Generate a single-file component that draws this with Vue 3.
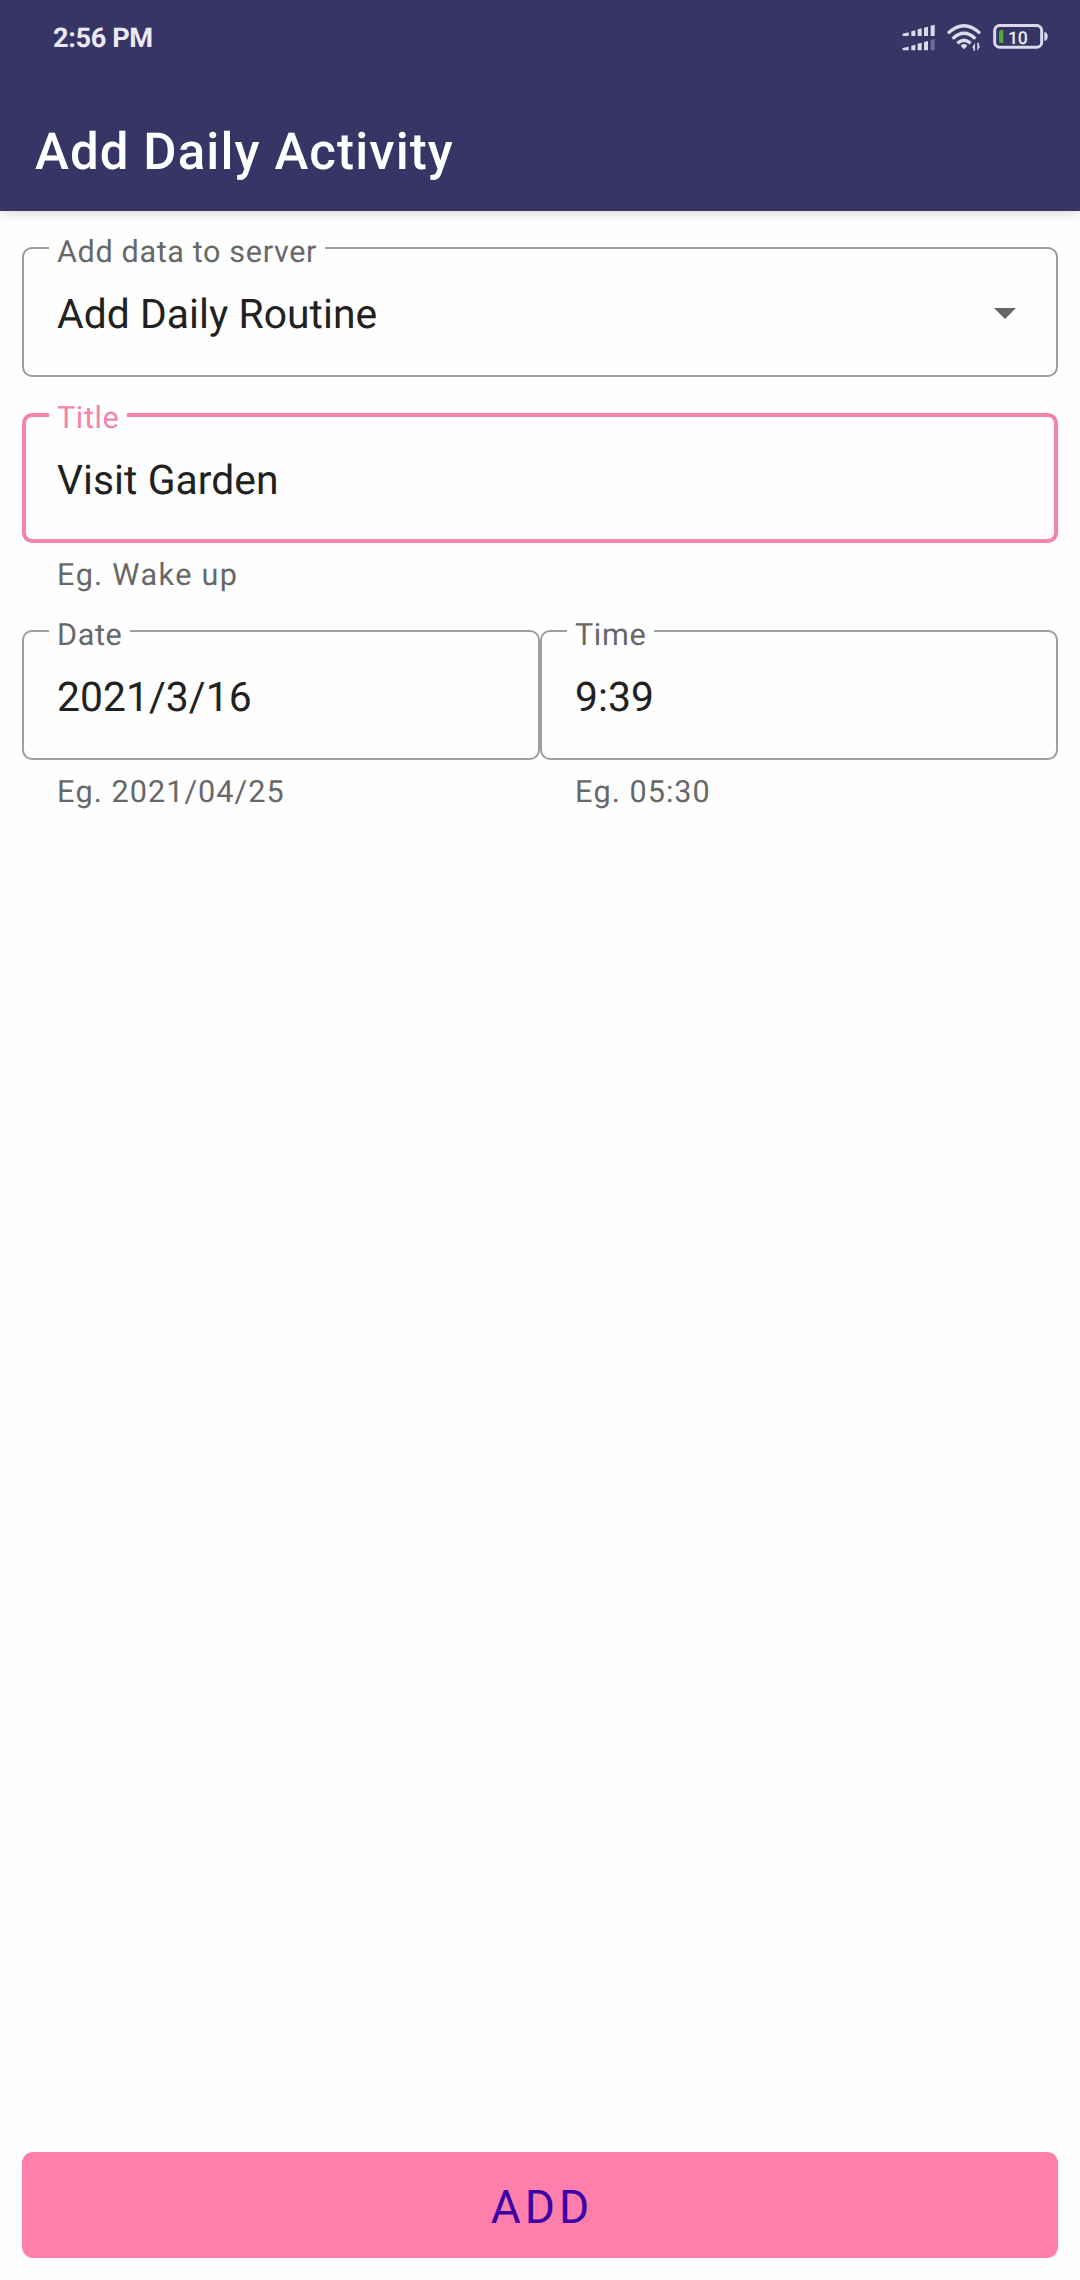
<script setup>
const topBars = [
  { x: 38, y: 67 },
  { x: 64, y: 61 },
  { x: 83, y: 55 },
  { x: 102, y: 50 },
  { x: 122, y: 44 },
]
const barPath = (b, i, bottom) => {
  const w = i === 0 ? 18 : 12
  return `M${b.x} ${b.y + (i === 0 ? 4 : 3)}L${b.x + w} ${b.y}V${bottom}H${b.x}Z`
}
const dateFields = [
  { label: 'Date', value: '2021/3/16', hint: 'Eg. 2021/04/25' },
  { label: 'Time', value: '9:39', hint: 'Eg. 05:30' },
]
</script>

<template>
  <div class="screen">
    <header class="header">
      <div class="status">
        <span class="clock">2:56 PM</span>
        <svg class="icons" width="170" height="56" viewBox="0 0 510 168">
          <g fill="#dcdaea">
            <path v-for="(b, i) in topBars" :key="'a' + i" :d="barPath(b, i, 78)" />
            <path
              v-for="(b, i) in topBars"
              :key="'b' + i"
              :d="barPath({ x: b.x, y: b.y + 43 }, i, 121)"
              :opacity="i === 4 ? 0.35 : 1"
            />
          </g>
          <g fill="none" stroke="#dcdaea" stroke-width="10">
            <path d="M174 70Q222 24 270 70" />
            <path d="M188 86Q222 54 256 86" />
            <path d="M202 100Q222 82 242 100" />
          </g>
          <path d="M222 118L213 109Q213 102 222 102Q231 102 231 109Z" fill="#dcdaea" />
          <g fill="#dcdaea">
            <path d="M255 98V122H250V113H246Z" />
            <path d="M262 122V98H267V108H271Z" />
          </g>
          <rect x="314" y="46.500" width="141" height="65" rx="15" fill="none" stroke="#dcdaea" stroke-width="9" />
          <path d="M463 67H466Q473 69 473 79.500Q473 90 466 92H463Z" fill="#dcdaea" />
          <path d="M340 60V99H334Q327 99 327 92V67Q327 60 334 60Z" fill="#57a639" />
          <text x="354" y="102" class="level">10</text>
        </svg>
      </div>
      <h1 class="title">Add Daily Activity</h1>
    </header>

    <main class="form">
      <div class="box">
        <span class="label">Add data to server</span>
        <span class="value">Add Daily Routine</span>
        <svg class="arrow" width="22" height="11" viewBox="0 0 22 11"><path d="M0 0H22L11 11Z" fill="#666" /></svg>
      </div>

      <div class="box active">
        <span class="label">Title</span>
        <span class="value">Visit Garden</span>
      </div>
      <p class="hint">Eg. Wake up</p>

      <div class="row">
        <div v-for="f in dateFields" :key="f.label" class="col">
          <div class="box">
            <span class="label">{{ f.label }}</span>
            <span class="value">{{ f.value }}</span>
          </div>
          <p class="hint">{{ f.hint }}</p>
        </div>
      </div>
    </main>

    <div class="footer">
      <button class="add">ADD</button>
    </div>
  </div>
</template>

<style>
body {
  margin: 0;
  background: #fff;
}
</style>

<style scoped>
.screen {
  width: 1080px;
  height: 2280px;
  display: flex;
  flex-direction: column;
  background: #fefefe;
  font-family: Roboto, sans-serif;
  text-rendering: geometricPrecision;
  overflow: hidden;
}
.header {
  height: 211px;
  background: #363565;
  box-shadow: 0 2px 10px rgba(0, 0, 0, 0.16);
}
.status {
  height: 76px;
  padding: 0 20px 0 53px;
  display: flex;
  justify-content: space-between;
  align-items: center;
}
.clock {
  font-size: 27.2px;
  font-weight: 700;
  line-height: 32px;
  letter-spacing: -0.4px;
  color: #ebe9f3;
}
.icons {
  display: block;
}
.level {
  font-family: Roboto, sans-serif;
  font-size: 53px;
  font-weight: 500;
  letter-spacing: -1px;
  fill: #ebe9f3;
}
.title {
  margin: 0;
  padding: 47px 0 0 35px;
  font-size: 51px;
  line-height: 60px;
  font-weight: 500;
  letter-spacing: 1.1px;
  color: #fff;
}
.form {
  flex: 1;
  padding: 36px 22px 0;
}
.box {
  position: relative;
  box-sizing: border-box;
  height: 130px;
  border: 2px solid #9e9e9e;
  border-radius: 10px;
  padding: 0 40px 0 33px;
  display: flex;
  align-items: center;
  justify-content: space-between;
}
.box.active {
  margin-top: 36px;
  border: 4px solid #f484ae;
  padding-left: 31px;
}
.label {
  position: absolute;
  left: 25px;
  top: -14px;
  padding: 0 8px;
  background: #fefefe;
  font-size: 30.6px;
  line-height: 36px;
  letter-spacing: 0.62px;
  color: #686868;
}
.active .label {
  left: 23px;
  top: -16px;
  color: #f484ae;
}
.value {
  font-size: 40.8px;
  line-height: 48px;
  padding-top: 4px;
  letter-spacing: 0.05px;
  color: #212121;
}
.arrow {
  margin-top: 3px;
}
.hint {
  margin: 0;
  padding: 15px 0 0 35px;
  height: 72px;
  font-size: 30.6px;
  line-height: 36px;
  letter-spacing: 1.05px;
  font-kerning: none;
  color: #686868;
}
.active + .hint {
  letter-spacing: 1.25px;
}
.row {
  display: flex;
}
.col {
  flex: 1;
}
.footer {
  padding: 0 22px 22px;
}
.add {
  display: block;
  width: 100%;
  height: 106px;
  padding: 4px 0 0 4px;
  border: 0;
  border-radius: 11px;
  background: #ff7fac;
  color: #3c00a8;
  font-family: Roboto, sans-serif;
  font-size: 46px;
  font-weight: 400;
  letter-spacing: 4.1px;
}
</style>
